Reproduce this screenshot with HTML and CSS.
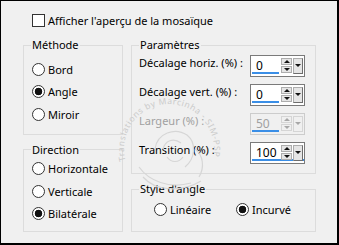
FILE: index.html
```html
<!DOCTYPE html>
<html lang="fr">
<head>
  <meta charset="UTF-8">
  <title>Mosaïque</title>
  <link rel="stylesheet" href="styles.css">
</head>
<body>

  <div class="dialog">

    <label class="check-row"><span class="checkbox"></span>Afficher l'aperçu de la mosaïque</label>

    <div class="columns">
      <div class="col-left">
        <fieldset class="group methode">
          <legend>Méthode</legend>
          <div class="radio-row"><span class="radio"></span>Bord</div>
          <div class="radio-row"><span class="radio checked"></span>Angle</div>
          <div class="radio-row"><span class="radio"></span>Miroir</div>
        </fieldset>

        <fieldset class="group direction">
          <legend>Direction</legend>
          <div class="radio-row"><span class="radio"></span>Horizontale</div>
          <div class="radio-row"><span class="radio"></span>Verticale</div>
          <div class="radio-row"><span class="radio checked"></span>Bilatérale</div>
        </fieldset>
      </div>

      <div class="col-right">
        <fieldset class="group params">
          <legend>Paramètres</legend>

          <div class="param-row">
            <span class="param-label">Décalage horiz. (%) :</span>
            <div class="spin">
              <span class="spin-value">0</span>
              <span class="spin-bar" style="width: 27px"></span>
              <span class="spin-arrows"><span class="arrow up"></span><span class="arrow down"></span></span>
              <span class="spin-drop"></span>
            </div>
          </div>

          <div class="param-row">
            <span class="param-label">Décalage vert. (%) :</span>
            <div class="spin">
              <span class="spin-value">0</span>
              <span class="spin-bar" style="width: 27px"></span>
              <span class="spin-arrows"><span class="arrow up"></span><span class="arrow down"></span></span>
              <span class="spin-drop"></span>
            </div>
          </div>

          <div class="param-row disabled">
            <span class="param-label">Largeur (%) :</span>
            <div class="spin">
              <span class="spin-value">50</span>
              <span class="spin-bar" style="width: 27px"></span>
              <span class="spin-arrows"><span class="arrow up"></span><span class="arrow down"></span></span>
              <span class="spin-drop"></span>
            </div>
          </div>

          <div class="param-row">
            <span class="param-label">Transition (%) :</span>
            <div class="spin">
              <span class="spin-value">100</span>
              <span class="spin-bar" style="width: 52px"></span>
              <span class="spin-arrows"><span class="arrow up"></span><span class="arrow down"></span></span>
              <span class="spin-drop"></span>
            </div>
          </div>
        </fieldset>

        <fieldset class="group style">
          <legend>Style d'angle</legend>
          <div class="radio-line">
            <div class="radio-row lineaire"><span class="radio"></span>Linéaire</div>
            <div class="radio-row"><span class="radio checked"></span>Incurvé</div>
          </div>
        </fieldset>
      </div>
    </div>

    <!-- filigrane du traducteur -->
    <svg class="watermark" width="120" height="110" viewBox="0 0 120 110">
      <defs>
        <path id="cercle" d="M 14.5 73.6 A 45 45 0 1 1 101.5 73.6"/>
      </defs>
      <text class="wm-text"><textPath href="#cercle" textLength="160" lengthAdjust="spacing">Translations by Marcinha - SIM-PSP</textPath></text>
      <g class="wm-draw">
        <path d="M 44 62 C 46 46, 64 40, 76 48 C 86 56, 84 72, 74 80"/>
        <path d="M 52 62 C 54 54, 62 50, 70 56"/>
        <path d="M 28 80 C 38 94, 58 102, 80 96"/>
        <path d="M 32 90 C 44 104, 70 106, 90 94"/>
        <path d="M 84 62 C 92 68, 94 80, 88 90"/>
        <path d="M 56 70 C 60 76, 68 76, 72 70"/>
      </g>
    </svg>

  </div>

</body>
</html>
```

FILE: styles.css
```css
    body {
      margin: 0;
      padding: 0;
      font-family: "Noto Sans", sans-serif;
      font-size: 11px;
      color: #000;
    }

    .dialog {
      position: relative;
      width: 339px;
      height: 245px;
      box-sizing: border-box;
      background-color: #f0f0f0;
      border-style: solid;
      border-color: #000;
      border-width: 1px 2px 2px 1px;
      overflow: hidden;
    }

    .check-row {
      display: flex;
      align-items: center;
      gap: 3px;
      height: 14px;
      margin: 12px 0 0 31px;
    }

    .checkbox {
      width: 13px;
      height: 13px;
      box-sizing: border-box;
      border: 1px solid #333;
      background: #fff;
    }

    .columns {
      display: flex;
      gap: 8px;
      margin: 10px 0 0 22px;
    }

    .col-left {
      width: 100px;
    }

    .col-right {
      width: 185px;
    }

    .group {
      margin: 0;
      min-width: 0;
      border: 1px solid #dcdcdc;
      padding: 0 7px;
    }

    .group legend {
      padding: 0 1px;
      line-height: 16px;
    }

    .methode {
      padding-top: 5px;
      padding-bottom: 8px;
    }

    .direction {
      margin-top: 7px;
      padding-bottom: 6px;
    }

    .radio-row {
      display: flex;
      align-items: center;
      gap: 3px;
      height: 22.5px;
    }

    .radio {
      width: 13px;
      height: 13px;
      margin-left: 1px;
      box-sizing: border-box;
      border: 1px solid #333;
      border-radius: 50%;
      background: #fff;
    }

    .radio.checked {
      background: radial-gradient(circle, #111 3.5px, #fff 4.1px);
    }

    /* Paramètres */
    .params {
      padding: 2px 10px 2px 7px;
    }

    .param-row {
      display: flex;
      justify-content: space-between;
      align-items: flex-start;
      height: 29px;
    }

    .param-label {
      line-height: 16px;
    }

    .disabled .param-label,
    .disabled .spin-value {
      color: #a0a0a0;
    }

    .spin {
      position: relative;
      display: flex;
      width: 55px;
      height: 22px;
      box-sizing: border-box;
      border: 1px solid #7a7a7a;
      background: #fff;
    }

    .disabled .spin {
      border-color: #cccccc;
      background: #f0f0f0;
    }

    .spin-value {
      width: 25px;
      padding-left: 5px;
      line-height: 20px;
      font-size: 12px;
    }

    .spin-bar {
      position: absolute;
      left: 1px;
      bottom: 2px;
      height: 2px;
      background: #3a8ee6;
    }

    .spin-arrows {
      display: flex;
      flex-direction: column;
      gap: 1px;
      margin-top: 2px;
    }

    .arrow {
      position: relative;
      width: 11px;
      height: 7px;
      box-sizing: border-box;
      border: 1px solid #adadad;
      background: #e5e5e5;
    }

    .arrow::after {
      content: "";
      position: absolute;
      left: 2px;
      top: 1px;
      border-left: 3px solid transparent;
      border-right: 3px solid transparent;
    }

    .arrow.up::after {
      border-bottom: 3px solid #111;
    }

    .arrow.down::after {
      border-top: 3px solid #111;
    }

    .spin-drop {
      position: relative;
      width: 10px;
      height: 16px;
      margin: 2px 0 0 1px;
      box-sizing: border-box;
      border: 1px solid #adadad;
      border-right-color: #6d6d6d;
      border-bottom-color: #6d6d6d;
      background: #e5e5e5;
    }

    .spin-drop::after {
      content: "";
      position: absolute;
      left: 1px;
      top: 5px;
      border-left: 3px solid transparent;
      border-right: 3px solid transparent;
      border-top: 3px solid #111;
    }

    .disabled .arrow,
    .disabled .spin-drop {
      border-color: #d5d5d5;
      background: #f0f0f0;
    }

    .disabled .arrow.up::after { border-bottom-color: #a8a8a8; }
    .disabled .arrow.down::after,
    .disabled .spin-drop::after { border-top-color: #a8a8a8; }

    /* Style d'angle */
    .style {
      margin-top: 7px;
      padding: 1px 7px 10px;
    }

    .radio-line {
      display: flex;
    }

    .lineaire {
      width: 82px;
      margin-left: 14px;
    }

    .watermark {
      position: absolute;
      left: 110px;
      top: 86px;
      pointer-events: none;
    }

    .wm-text {
      font-size: 8.5px;
      fill: #cbcbcb;
    }

    .wm-draw path {
      fill: none;
      stroke: #d6d6d6;
      stroke-width: 1.2;
    }
```
